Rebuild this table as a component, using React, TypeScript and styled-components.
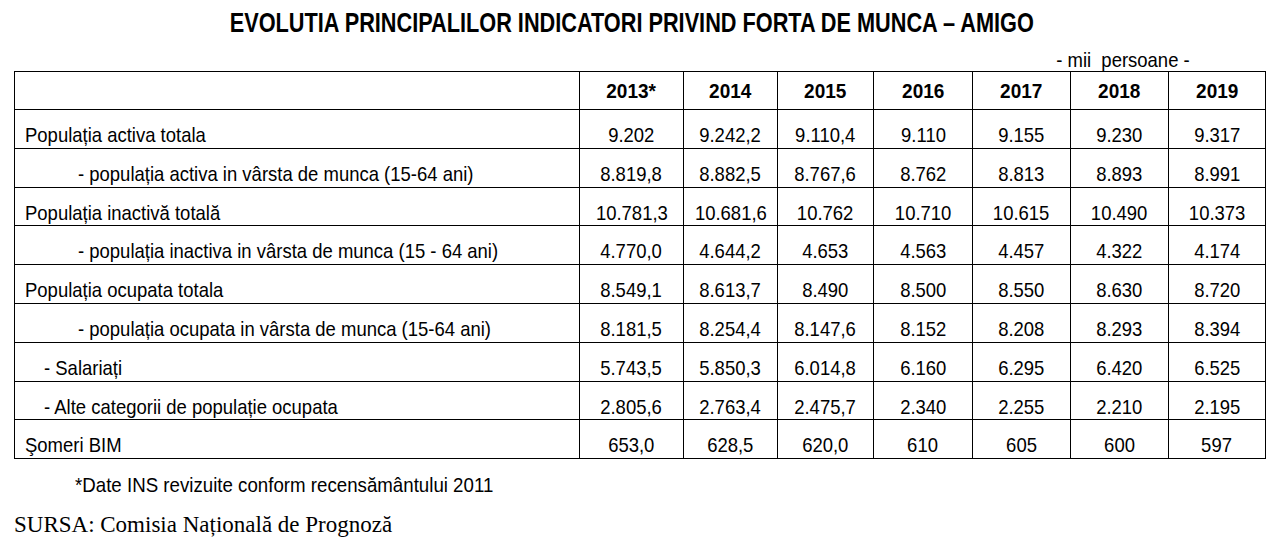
import styled, { createGlobalStyle } from 'styled-components';

const GlobalStyle = createGlobalStyle`
  html, body {
    margin: 0;
    padding: 0;
    background: #ffffff;
  }
  body {
    font-family: 'Liberation Sans', Arial, sans-serif;
    color: #000;
  }
`;

// the source uses a narrow sans; squeeze Liberation Sans to its width
const Narrow = styled.span<{ $sx: number; $origin?: string }>`
  display: inline-block;
  white-space: nowrap;
  transform: scaleX(${(p) => p.$sx});
  transform-origin: ${(p) => p.$origin || 'center'};
`;

const Page = styled.div`
  width: 1275px;
  height: 548px;
  padding: 7px 0 0 14px;
  box-sizing: border-box;
  overflow: hidden;
`;

const Title = styled.h1`
  margin: 0;
  width: 1236px;
  text-align: center;
  font-size: 28px;
  line-height: 32px;
  font-weight: bold;
`;

const Unit = styled.div`
  width: 1176px;
  text-align: right;
  font-size: 21px;
  line-height: 22px;
  margin-top: 10px;
`;

const Table = styled.table`
  border-collapse: collapse;
  table-layout: fixed;
  width: 1252px;
  font-size: 21px;
`;

const Row = styled.tr<{ $h: number }>`
  height: ${(p) => p.$h}px;
`;

const HeadCell = styled.th`
  border: 1px solid #000;
  padding: 8px 0 0 0;
  vertical-align: top;
  font-size: 20px;
  font-weight: bold;
  text-align: center;
`;

const LabelCell = styled.td<{ $indent: number }>`
  border: 1px solid #000;
  padding: 13px 0 0 ${(p) => 10 + p.$indent}px;
  vertical-align: top;
  text-align: left;
  white-space: nowrap;
`;

const NumCell = styled.td`
  border: 1px solid #000;
  padding: 13px 0 0 0;
  vertical-align: top;
  text-align: center;
  white-space: nowrap;
`;

const Note = styled.p`
  margin: 14px 0 0 61px;
  font-size: 21px;
  line-height: 24px;
`;

const Source = styled.p`
  margin: 15px 0 0 0;
  font-family: 'Liberation Serif', 'Times New Roman', serif;
  font-size: 23px;
  line-height: 26px;
`;

const SX = 0.88;
const widths = [565, 104, 94, 96, 99, 98, 98, 97];
const years = ['2013*', '2014', '2015', '2016', '2017', '2018', '2019'];

type Indicator = { label: string; indent: number; values: string[] };

const rows: Indicator[] = [
  { label: 'Populația activa totala', indent: 0, values: ['9.202', '9.242,2', '9.110,4', '9.110', '9.155', '9.230', '9.317'] },
  { label: '- populația activa in vârsta de munca (15-64 ani)', indent: 53, values: ['8.819,8', '8.882,5', '8.767,6', '8.762', '8.813', '8.893', '8.991'] },
  { label: 'Populația inactivă totală', indent: 0, values: ['10.781,3', '10.681,6', '10.762', '10.710', '10.615', '10.490', '10.373'] },
  { label: '- populația inactiva in vârsta de munca (15 - 64 ani)', indent: 53, values: ['4.770,0', '4.644,2', '4.653', '4.563', '4.457', '4.322', '4.174'] },
  { label: 'Populația ocupata totala', indent: 0, values: ['8.549,1', '8.613,7', '8.490', '8.500', '8.550', '8.630', '8.720'] },
  { label: '- populația ocupata in vârsta de munca (15-64 ani)', indent: 53, values: ['8.181,5', '8.254,4', '8.147,6', '8.152', '8.208', '8.293', '8.394'] },
  { label: '- Salariați', indent: 19, values: ['5.743,5', '5.850,3', '6.014,8', '6.160', '6.295', '6.420', '6.525'] },
  { label: '- Alte categorii de populație ocupata', indent: 19, values: ['2.805,6', '2.763,4', '2.475,7', '2.340', '2.255', '2.210', '2.195'] },
  { label: 'Şomeri BIM', indent: 0, values: ['653,0', '628,5', '620,0', '610', '605', '600', '597'] },
];

const App = () => {
  return (
    <>
      <GlobalStyle />
      <Page>
        <Title>
          <Narrow $sx={0.775}>EVOLUTIA PRINCIPALILOR INDICATORI PRIVIND FORTA DE MUNCA – AMIGO</Narrow>
        </Title>
        <Unit>
          <Narrow $sx={SX} $origin="right">- mii&nbsp; persoane -</Narrow>
        </Unit>
        <Table>
          <colgroup>
            {widths.map((w, i) => (
              <col key={i} style={{ width: w }} />
            ))}
          </colgroup>
          <thead>
            <Row $h={38}>
              <HeadCell />
              {years.map((y) => (
                <HeadCell key={y}>
                  <Narrow $sx={0.95}>{y}</Narrow>
                </HeadCell>
              ))}
            </Row>
          </thead>
          <tbody>
            {rows.map((r) => (
              <Row $h={38.8} key={r.label}>
                <LabelCell $indent={r.indent}>
                  <Narrow $sx={SX} $origin="left">{r.label}</Narrow>
                </LabelCell>
                {r.values.map((v, i) => (
                  <NumCell key={i}>
                    <Narrow $sx={SX}>{v}</Narrow>
                  </NumCell>
                ))}
              </Row>
            ))}
          </tbody>
        </Table>
        <Note>
          <Narrow $sx={0.89} $origin="left">*Date INS revizuite conform recensământului 2011</Narrow>
        </Note>
        <Source>SURSA: Comisia Națională de Prognoză</Source>
      </Page>
    </>
  );
};

export default App;
